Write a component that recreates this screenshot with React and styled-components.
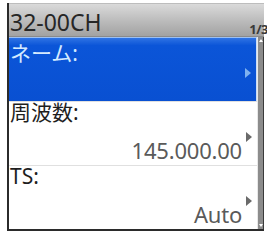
import React from "react";
import styled, { createGlobalStyle } from "styled-components";

const GlobalStyle = createGlobalStyle`
  html, body {
    margin: 0;
    padding: 0;
    background: #ffffff;
  }
  body {
    font-family: "Noto Sans", "Noto Sans CJK JP", sans-serif;
  }
`;

const items = [
  { label: "ネーム:", value: "", selected: true },
  { label: "周波数:", value: "145.000.00" },
  { label: "TS:", value: "Auto" },
];

const App = () => {
  return (
    <>
      <GlobalStyle />
      <Screen>
        <Header>
          <Title>32-00CH</Title>
          <PageNum>1/3</PageNum>
        </Header>
        <Body>
          <List>
            {items.map((item, i) => (
              <Row key={i} $selected={item.selected}>
                <Label $selected={item.selected}>{item.label}</Label>
                <Arrow $selected={item.selected} />
                <Value>{item.value}</Value>
              </Row>
            ))}
          </List>
          <Scrollbar>
            <ScrollArrow />
            <ScrollArrow $down />
          </Scrollbar>
        </Body>
      </Screen>
    </>
  );
};

export default App;

const Screen = styled.div`
  margin: 3px 0 0 7px;
  width: 257px;
  height: 228px;
  border-left: 2px solid #2b2b2b;
  border-bottom: 2px solid #2b2b2b;
  display: flex;
  flex-direction: column;
  box-sizing: border-box;
`;

const Header = styled.div`
  height: 34px;
  display: flex;
  align-items: flex-end;
  justify-content: space-between;
  background: linear-gradient(#dadada, #bababa 55%, #a2a2a2);
  border-top: 1px solid #bdbdbd;
  border-bottom: 1px solid #8a8a8a;
  box-sizing: border-box;
`;

const Title = styled.div`
  font-size: 23px;
  line-height: 27px;
  color: #262626;
  padding-left: 1px;
`;

const PageNum = styled.div`
  font-size: 13px;
  font-weight: bold;
  line-height: 13px;
  color: #3a3a3a;
  margin-right: -4px;
  letter-spacing: -0.5px;
`;

const Body = styled.div`
  flex: 1;
  display: flex;
  min-height: 0;
`;

const List = styled.div`
  flex: 1;
  display: flex;
  flex-direction: column;
`;

const Row = styled.div`
  height: 64px;
  box-sizing: border-box;
  display: grid;
  grid-template-columns: 1fr 15px;
  grid-template-rows: 28px 36px;
  background: ${(p) =>
    p.$selected ? "linear-gradient(#2f73e4, #0b55d8 12%, #0950d2)" : "#ffffff"};
  border-top: 1px solid ${(p) => (p.$selected ? "#9cc0f2" : "#e0e0e0")};
  ${(p) => p.$selected && "border-right: 1px solid #c9dcf6;"}
`;

const Label = styled.div`
  grid-column: 1;
  grid-row: 1;
  font-size: 21px;
  line-height: 26px;
  padding-left: 1px;
  margin-top: ${(p) => (p.$selected ? "2px" : "-3px")};
  color: ${(p) => (p.$selected ? "#d4eaff" : "#1e1e1e")};
`;

const Value = styled.div`
  grid-column: 1;
  grid-row: 2;
  justify-self: end;
  font-size: 22px;
  line-height: 24px;
  color: #5a5a5a;
  margin-top: 8px;
  letter-spacing: -0.2px;
`;

const Arrow = styled.div`
  grid-column: 2;
  grid-row: 2;
  width: 0;
  height: 0;
  margin: 2px 0 0 4px;
  border-top: 5px solid transparent;
  border-bottom: 5px solid transparent;
  border-left: 6px solid ${(p) => (p.$selected ? "#7fb2f0" : "#6a6a6a")};
`;

const Scrollbar = styled.div`
  width: 7px;
  background: #8c8c8c;
  border-left: 1px solid #e8e8e8;
  border-right: 1px solid #3a3a3a;
  display: flex;
  flex-direction: column;
  justify-content: space-between;
  align-items: center;
  padding: 2px 0;
  box-sizing: border-box;
`;

const ScrollArrow = styled.div`
  width: 0;
  height: 0;
  border-left: 2px solid transparent;
  border-right: 2px solid transparent;
  ${(p) =>
    p.$down
      ? "border-top: 3px solid #ffffff;"
      : "border-bottom: 3px solid #ffffff;"}
`;
